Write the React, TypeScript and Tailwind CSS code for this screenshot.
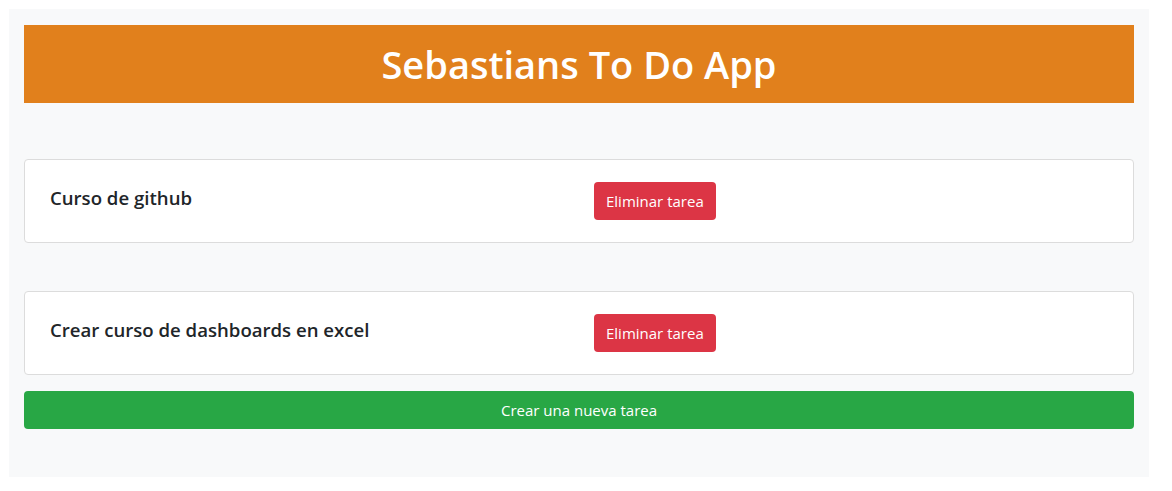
const tasks = ["Curso de github", "Crear curso de dashboards en excel"]

function TaskCard({ title }: { title: string }) {
  return (
    <div className="flex h-[84px] items-center rounded border border-[#dcdcdc] bg-white">
      <div className="w-[569px] pl-[25px] pb-[6px]">
        <h5 className="text-[18.6px] font-semibold text-[#212529]">{title}</h5>
      </div>
      <button className="h-[38px] rounded bg-[#dc3545] px-3 text-[15px] text-white">
        Eliminar tarea
      </button>
    </div>
  )
}

export default function App() {
  return (
    <div className="min-h-[491px] bg-white p-[9px] font-['Open_Sans',sans-serif]">
      <div className="w-[1140px] bg-[#f8f9fa] px-[15px] pt-[16px] pb-[48px]">
        <header className="flex h-[78px] items-center justify-center bg-[#e1801c]">
          <h1 className="text-[38px] font-semibold text-white">Sebastians To Do App</h1>
        </header>

        <div className="mt-[56px] flex flex-col gap-[48px]">
          {tasks.map((t) => (
            <TaskCard key={t} title={t} />
          ))}
        </div>

        <button className="mt-[16px] h-[38px] w-full rounded bg-[#28a745] text-[15px] text-white">
          Crear una nueva tarea
        </button>
      </div>
    </div>
  )
}
